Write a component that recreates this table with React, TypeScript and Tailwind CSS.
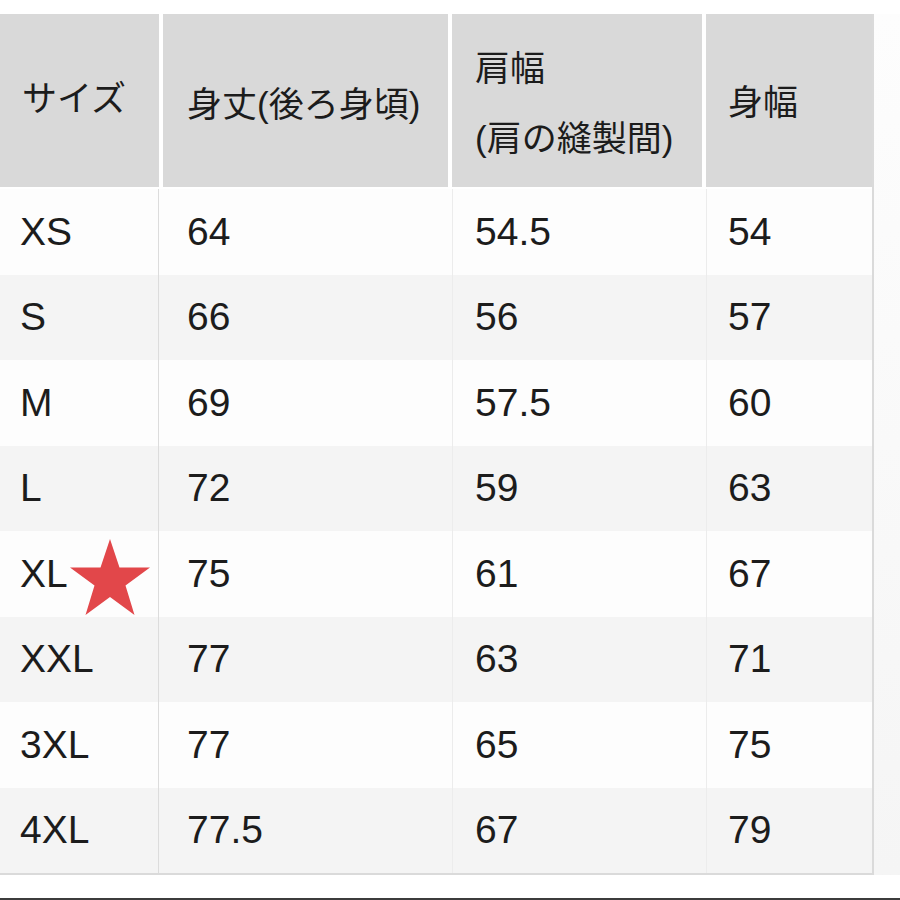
import React from "react";

type Row = [string, string, string, string];

const rows: Row[] = [
  ["XS", "64", "54.5", "54"],
  ["S", "66", "56", "57"],
  ["M", "69", "57.5", "60"],
  ["L", "72", "59", "63"],
  ["XL", "75", "61", "67"],
  ["XXL", "77", "63", "71"],
  ["3XL", "77", "65", "75"],
  ["4XL", "77.5", "67", "79"],
];

function Star() {
  return (
    <svg width="84" height="80" viewBox="0 0 84 80" className="absolute left-[68px] top-[7px]">
      <polygon
        points="42,1 51.5,29.5 82,29.5 57.5,47.5 66.5,77 42,59 17.5,77 26.5,47.5 2,29.5 32.5,29.5"
        fill="#e2474a"
      />
    </svg>
  );
}

function App() {
  const font = { fontFamily: '"Liberation Sans", "Noto Sans CJK JP", sans-serif' };
  return (
    <div className="w-[900px] h-[900px] bg-white flex flex-col text-[#1c1c1c]" style={font}>
      <div className="h-[14px]" />
      <div className="flex">
        <div className="w-[874px] border-r-2 border-b-2 border-[#dadada]">
          {/* header */}
          <div className="grid grid-cols-[159px_285px_250px_166px] gap-x-[4px] h-[173px] text-[35px]">
            <div className="bg-[#d9d9d9] flex items-center pl-[22px] pb-[2px]">サイズ</div>
            <div className="bg-[#d9d9d9] flex items-center pl-[24px] pt-[10px]">身丈(後ろ身頃)</div>
            <div className="bg-[#d9d9d9] flex flex-col justify-center pl-[23px] leading-[70px] pt-[6px]">
              <span>肩幅</span>
              <span>(肩の縫製間)</span>
            </div>
            <div className="bg-[#d9d9d9] flex items-center pl-[22px] pt-[6px]">身幅</div>
          </div>
          <div className="h-[2px]" />
          {/* body */}
          {rows.map((r, i) => (
            <div
              key={r[0]}
              className={
                "grid grid-cols-[159px_285px_250px_166px] gap-x-[4px] h-[85.5px] text-[39px] " +
                (i % 2 === 0 ? "bg-[#fdfdfd]" : "bg-[#f4f4f4]")
              }
            >
              <div className="relative flex items-center pl-[20px] border-r border-[#dcdcdc]">
                {r[0]}
                {r[0] === "XL" && <Star />}
              </div>
              <div className="flex items-center pl-[24px]">{r[1]}</div>
              <div className="flex items-center pl-[22px] border-l border-[#ececec]">{r[2]}</div>
              <div className="flex items-center pl-[21px] border-l border-[#ececec]">{r[3]}</div>
            </div>
          ))}
        </div>
        <div className="flex-1 bg-gradient-to-b from-[#fdfdfd] to-[#f5f5f5]" />
      </div>
      <div className="flex-1" />
      <div className="h-[2px] bg-[#3c3c3c]" />
    </div>
  );
}

export default App;
